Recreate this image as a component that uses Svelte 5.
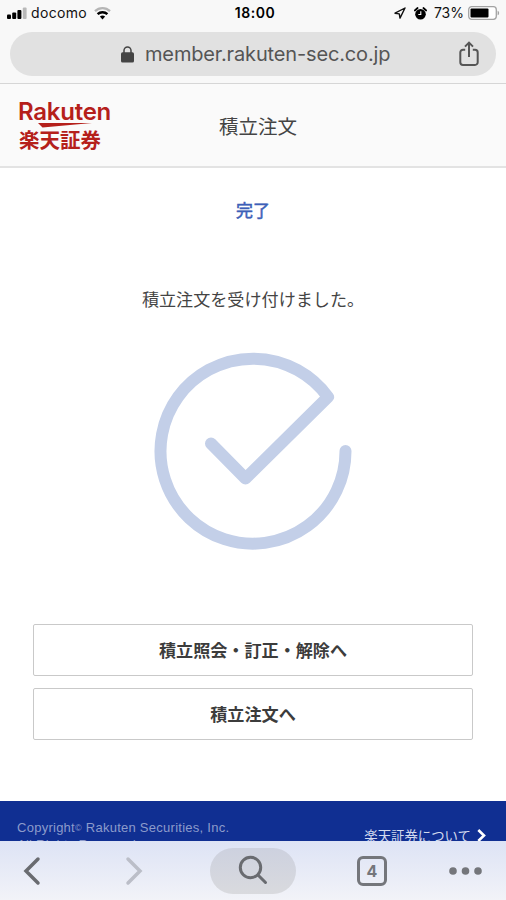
<script lang="ts">
  const host = 'member.rakuten-sec.co.jp';
  const tabCount = 4;
  const actions = ['積立照会・訂正・解除へ', '積立注文へ'];
</script>

<div class="screen">
  <div class="browser-top">
    <div class="status">
      <div class="status-left">
        <svg class="signal" width="20" height="12" viewBox="0 0 20 12">
          <rect x="0" y="7.5" width="4" height="4.5" rx="1" />
          <rect x="5.2" y="5.5" width="4" height="6.5" rx="1" />
          <rect x="10.4" y="3" width="4" height="9" rx="1" />
          <rect x="15.8" y="0.5" width="3.8" height="11.5" rx="1" fill="#b9b9b9" />
        </svg>
        <span class="carrier">docomo</span>
        <svg class="wifi" width="17" height="13" viewBox="0 0 17 13">
          <path d="M1 4.2a10.8 10.8 0 0 1 15 0" fill="none" stroke="#b5b5b5" stroke-width="2.3" />
          <path d="M3.6 7.2a7 7 0 0 1 9.8 0" fill="none" stroke="#000" stroke-width="2.4" />
          <path d="M5.9 9.6a3.8 3.8 0 0 1 5.2 0L8.5 12.4z" />
        </svg>
      </div>
      <span class="clock">18:00</span>
      <div class="status-right">
        <svg width="12" height="12" viewBox="0 0 12 12">
          <path d="M11 1 1 6.2l4.3.7.7 4.2z" fill="none" stroke="#111" stroke-width="1.4" stroke-linejoin="round" />
        </svg>
        <svg class="alarm" width="13" height="13" viewBox="0 0 13 13">
          <circle cx="6.5" cy="7.2" r="5.3" />
          <path d="M.8 3.5 3.6 1M12.2 3.5 9.4 1" stroke="#000" stroke-width="1.7" stroke-linecap="round" />
          <path d="M6.8 4.2v3.3H4.3" fill="none" stroke="#fff" stroke-width="1.1" />
        </svg>
        <span class="percent">73%</span>
        <svg width="32" height="14" viewBox="0 0 32 14">
          <rect x=".7" y=".7" width="27.6" height="12.6" rx="3" fill="#fff" stroke="#a3a3a3" stroke-width="1.3" />
          <rect x="2.5" y="2.5" width="18" height="9" rx="1" />
          <path d="M29.6 4.7c2 .7 2 3.9 0 4.6z" fill="#a3a3a3" />
        </svg>
      </div>
    </div>

    <div class="address">
      <svg class="lock" width="13" height="17" viewBox="0 0 13 17">
        <path d="M3 7V4.5a3.5 3.5 0 0 1 7 0V7" fill="none" stroke="#444" stroke-width="1.5" />
        <rect x="0" y="6.3" width="13" height="10.2" rx="1.6" fill="#444" />
      </svg>
      <span class="host">{host}</span>
      <svg class="share" width="20" height="26" viewBox="0 0 20 26">
        <path
          d="M6.2 8.7H4a2.7 2.7 0 0 0-2.7 2.7v9.8A2.7 2.7 0 0 0 4 23.9h12a2.7 2.7 0 0 0 2.7-2.7v-9.8A2.7 2.7 0 0 0 16 8.7h-2.2M10 16V2M6 5.6l4-4 4 4"
          fill="none"
          stroke="#555"
          stroke-width="2"
        />
      </svg>
    </div>
  </div>

  <header class="site-header">
    <div class="logo">
      <span class="logo-en">Rakuten</span>
      <svg class="logo-swoosh" width="54" height="5" viewBox="0 0 54 5">
        <path d="M0 0h54L4.5 4.5z" fill="#b5201b" />
      </svg>
      <span class="logo-ja">楽天証券</span>
    </div>
    <h1>積立注文</h1>
  </header>

  <main>
    <p class="step">完了</p>
    <p class="message">積立注文を受け付けました。</p>
    <svg class="done" width="198" height="198" viewBox="0 0 198 198">
      <path
        d="M57 91.5 91.5 126.5 174 45A92.5 92.5 0 1 0 191.5 99"
        fill="none"
        stroke="#c3cfe8"
        stroke-width="12"
        stroke-linecap="round"
        stroke-linejoin="round"
      />
    </svg>
    <div class="actions">
      {#each actions as label}
        <button type="button">{label}</button>
      {/each}
    </div>
  </main>

  <footer>
    <p class="copyright">Copyright<span class="mark">©</span> Rakuten Securities, Inc.<br />All Rights Reserved.</p>
    <div class="about">
      <span>楽天証券について</span>
      <svg width="9" height="13" viewBox="0 0 9 13">
        <path d="M1.3 1 7 6.5 1.3 12" fill="none" stroke="#fff" stroke-width="2.6" />
      </svg>
    </div>
  </footer>

  <nav class="toolbar">
    <svg class="back" width="18" height="30" viewBox="0 0 18 30">
      <path d="M15 3 3 15l12 12" />
    </svg>
    <svg class="forward" width="18" height="30" viewBox="0 0 18 30">
      <path d="M3 3l12 12L3 27" />
    </svg>
    <div class="search">
      <svg width="30" height="30" viewBox="0 0 30 30">
        <circle cx="12.5" cy="12.5" r="10.2" />
        <path d="M20 20l7.5 7.5" />
      </svg>
    </div>
    <div class="tabs">{tabCount}</div>
    <svg class="more" width="33" height="8" viewBox="0 0 33 8">
      <circle cx="4" cy="4" r="3.8" />
      <circle cx="16.5" cy="4" r="3.8" />
      <circle cx="29" cy="4" r="3.8" />
    </svg>
  </nav>
</div>

<style>
  :global(body) {
    margin: 0;
    overflow: hidden;
  }

  .screen {
    display: flex;
    flex-direction: column;
    width: 506px;
    height: 900px;
    overflow: hidden;
    background: #fff;
    color: #444;
    font-family: 'Liberation Sans', 'Noto Sans CJK JP', sans-serif;
  }

  .screen > * {
    flex-shrink: 0;
    box-sizing: border-box;
  }

  svg {
    display: block;
    flex-shrink: 0;
  }

  p,
  h1 {
    margin: 0;
  }

  .browser-top {
    height: 84px;
    background: #f8f8f8;
    border-bottom: 1px solid #d6d6d6;
    font-family: Inter, sans-serif;
  }

  .status {
    display: grid;
    grid-template-columns: 1fr auto 1fr;
    align-items: center;
    height: 26px;
    padding: 0 6px 0 7px;
    margin-bottom: 6px;
    color: #111;
    font-size: 14px;
    line-height: 26px;
  }

  .status-left,
  .status-right {
    display: flex;
    align-items: center;
  }

  .carrier {
    margin: 0 7px 0 4px;
    letter-spacing: 0.35px;
  }

  .clock {
    padding-left: 3px;
    color: #000;
    font-weight: 600;
    letter-spacing: 0.5px;
  }

  .status-right {
    justify-content: flex-end;
  }

  .alarm {
    margin: 0 7px 0 8px;
  }

  .percent {
    margin-right: 4px;
  }

  .address {
    display: flex;
    align-items: center;
    height: 44px;
    margin: 0 10px;
    padding: 0 17px 0 111px;
    border-radius: 22px;
    background: #e1e1e1;
  }

  .host {
    margin-left: 11px;
    color: #555;
    font-size: 20px;
    letter-spacing: -0.15px;
    line-height: 45px;
  }

  .share {
    margin-left: auto;
  }

  .site-header {
    display: grid;
    grid-template-columns: 1fr auto 1fr;
    height: 84px;
    padding: 0 0 0 19px;
    background: #fafafa;
    border-bottom: 2px solid #e3e3e3;
  }

  .logo {
    display: flex;
    flex-direction: column;
    padding-top: 14px;
    color: #b5201b;
    font-weight: 700;
    white-space: nowrap;
  }

  .logo-en {
    height: 25px;
    margin-left: -1px;
    font-family: Inter, sans-serif;
    font-size: 24px;
    font-weight: 600;
    letter-spacing: -0.25px;
    line-height: 27px;
  }

  .logo-swoosh {
    margin-left: 19px;
  }

  .logo-ja {
    margin-top: -1px;
    font-family: 'Noto Sans CJK JP', sans-serif;
    font-size: 20.5px;
    line-height: 24px;
  }

  h1 {
    margin-right: 9px;
    font-family: 'Noto Sans CJK JP', sans-serif;
    font-size: 19.5px;
    font-weight: 400;
    line-height: 84px;
  }

  main {
    display: flex;
    flex-direction: column;
    align-items: center;
    height: 633px;
    font-family: 'Noto Sans CJK JP', sans-serif;
  }

  .step {
    margin-top: 30px;
    color: #3d5fb8;
    font-size: 17px;
    line-height: 24px;
    -webkit-text-stroke: 0.5px #3d5fb8;
  }

  .message {
    margin: 65px 0 41px;
    font-size: 17.1px;
    line-height: 24px;
  }

  .actions {
    display: flex;
    flex-direction: column;
    gap: 12px;
    align-self: stretch;
    margin: 74px 33px 0;
  }

  .actions button {
    height: 52px;
    padding: 0 0 2px;
    border: 1.5px solid #c9c9c9;
    border-radius: 2px;
    background: #fff;
    color: #3c3c3c;
    font-family: inherit;
    font-size: 17.1px;
    font-weight: 700;
  }

  footer {
    display: flex;
    justify-content: space-between;
    height: 40px;
    padding: 0 20px 0 17px;
    overflow: hidden;
    background: #102f92;
  }

  .copyright {
    padding-top: 18px;
    color: #8c9bcb;
    font-size: 13px;
    letter-spacing: 0.26px;
    line-height: 17px;
  }

  .mark {
    font-size: 9px;
    line-height: 1;
    vertical-align: 1px;
  }

  .about {
    display: flex;
    gap: 6px;
    align-items: center;
    height: 20px;
    padding-top: 24px;
    color: #d3daee;
    font-family: 'Noto Sans CJK JP', sans-serif;
    font-size: 13.4px;
    line-height: 20px;
  }

  .toolbar {
    display: flex;
    align-items: center;
    height: 59px;
    padding: 0 24px 0 23px;
    background: linear-gradient(#dde3f5, #f2f3f8);
  }

  .toolbar svg {
    fill: none;
    stroke: #696b70;
    stroke-width: 3.5px;
    stroke-linecap: round;
  }

  .toolbar .forward {
    margin-left: 84px;
    stroke: #bbbec8;
  }

  .search {
    display: flex;
    align-items: center;
    justify-content: center;
    width: 86px;
    height: 46px;
    margin: 0 61px 0 67px;
    border-radius: 23px;
    background: linear-gradient(#cdd1df, #d9dade);
  }

  .toolbar .search svg {
    margin-top: -1px;
    stroke-width: 3px;
  }

  .tabs {
    box-sizing: border-box;
    width: 30px;
    height: 30px;
    border: 3px solid #74767b;
    border-radius: 6px;
    color: #74767b;
    font-family: Inter, sans-serif;
    font-size: 16px;
    font-weight: 700;
    line-height: 24px;
    text-align: center;
  }

  .toolbar .more {
    margin-left: auto;
    fill: #74767b;
    stroke: none;
  }
</style>
